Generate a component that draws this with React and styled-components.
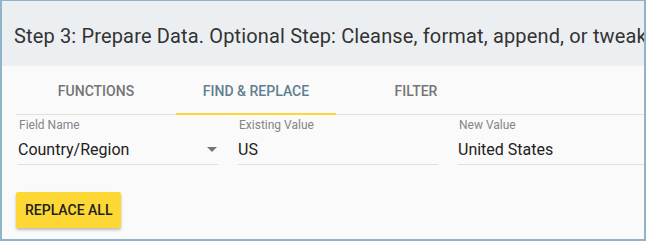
import styled, { createGlobalStyle } from "styled-components";

const GlobalStyle = createGlobalStyle`
  html, body {
    margin: 0;
    padding: 0;
    background: #ffffff;
  }
  body {
    font-family: Roboto, "Liberation Sans", sans-serif;
  }
`

const colors = {
  frame: '#8fb3c7',
  header: '#eceff2',
  panel: '#fafafa',
  yellow: '#fdd835',
  divider: '#e0e0e0',
  muted: '#757575',
  label: '#858585',
  active: '#5f7f90',
  text: '#212121',
}

const Frame = styled.div`
  width: 646px;
  height: 241px;
  box-sizing: border-box;
  border: 2px solid ${colors.frame};
  border-top-width: 1px;
  background-color: ${colors.panel};
  overflow: hidden;
  display: flex;
  flex-direction: column;
`

const Header = styled.div`
  height: 65px;
  flex-shrink: 0;
  background-color: ${colors.header};
  display: flex;
  align-items: center;
  padding-left: 12px;
  padding-top: 4px;
  box-sizing: border-box;
  white-space: nowrap;
  font-size: 20px;
  letter-spacing: 0.15px;
  color: #333333;
`

const Body = styled.div`
  padding: 0 0 0 14px;
  display: flex;
  flex-direction: column;
`

const TabBar = styled.div`
  display: flex;
  height: 48px;
  border-bottom: 1px solid ${colors.divider};
`

const Tab = styled.div`
  width: 160px;
  display: flex;
  align-items: center;
  justify-content: center;
  box-sizing: border-box;
  padding-top: 2px;
  font-size: 14px;
  font-weight: 500;
  color: ${props => props.active ? colors.active : colors.muted};
  border-bottom: 2px solid ${props => props.active ? colors.yellow : 'transparent'};
  margin-bottom: -1px;
`

const FieldRow = styled.div`
  display: flex;
  gap: 20px;
  padding-left: 2px;
  margin-top: 3px;
`

const Field = styled.div`
  width: ${props => props.wide ? '240px' : '200px'};
  flex-shrink: 0;
  display: flex;
  flex-direction: column;
`

const Label = styled.span`
  font-size: 12px;
  color: ${colors.label};
  line-height: 14px;
  padding-left: 1px;
`

const Value = styled.div`
  display: flex;
  align-items: center;
  justify-content: space-between;
  height: 30px;
  margin-top: 2px;
  font-size: 16px;
  color: ${colors.text};
  border-bottom: 1px solid ${colors.divider};
`

const Caret = styled.span`
  width: 0;
  height: 0;
  border-left: 5px solid transparent;
  border-right: 5px solid transparent;
  border-top: 5px solid ${colors.muted};
  margin-right: 1px;
`

const ReplaceButton = styled.button`
  align-self: flex-start;
  margin-top: 27px;
  height: 36px;
  padding: 0 9px;
  border: none;
  border-radius: 2px;
  background-color: ${colors.yellow};
  color: #212121;
  font-family: Roboto, "Liberation Sans", sans-serif;
  font-size: 14px;
  font-weight: 500;
  box-shadow: 0 2px 3px rgba(0, 0, 0, 0.25);
`

const fields = [
  { label: 'Field Name', value: 'Country/Region', select: true },
  { label: 'Existing Value', value: 'US' },
  { label: 'New Value', value: 'United States', wide: true },
]

function App() {
  return (
    <>
      <GlobalStyle />
      <Frame>
        <Header>Step 3: Prepare Data. Optional Step: Cleanse, format, append, or tweak</Header>
        <Body>
          <TabBar>
            <Tab>FUNCTIONS</Tab>
            <Tab active>FIND &amp; REPLACE</Tab>
            <Tab>FILTER</Tab>
          </TabBar>
          <FieldRow>
            {fields.map(field => (
              <Field key={field.label} wide={field.wide}>
                <Label>{field.label}</Label>
                <Value>
                  <span>{field.value}</span>
                  {field.select && <Caret />}
                </Value>
              </Field>
            ))}
          </FieldRow>
          <ReplaceButton>REPLACE ALL</ReplaceButton>
        </Body>
      </Frame>
    </>
  )
}

export default App
